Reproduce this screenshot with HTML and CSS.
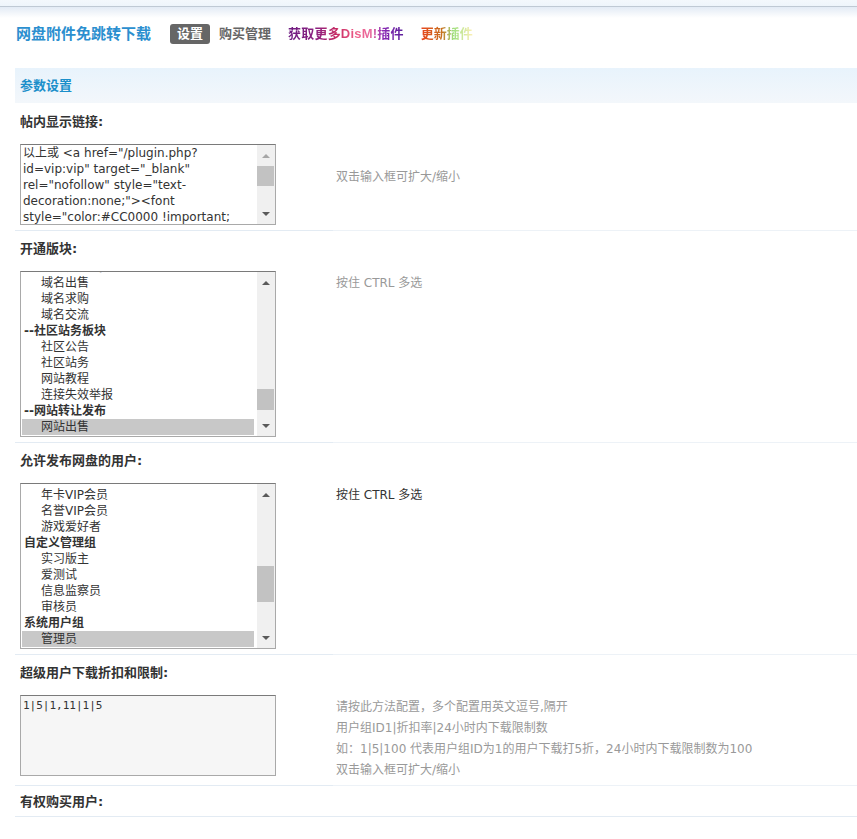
FILE: index.html
```html
<!DOCTYPE html>
<html lang="zh-CN">
  <head>
    <meta charset="UTF-8" />
    <title>网盘附件免跳转下载</title>
    <link rel="stylesheet" href="styles.css">
  </head>
  <body>
    <div class="topbar"></div>

    <div class="wrap">
      <div class="navhead">
        <h3>网盘附件免跳转下载</h3>
        <ul class="tabs">
          <li class="on">设置</li>
          <li>购买管理</li>
          <li><span class="more">获取更多DisM!插件</span></li>
          <li><span class="upd">更新插件</span></li>
        </ul>
      </div>

      <div class="secthead">参数设置</div>

      <!-- 帖内显示链接 -->
      <div class="row-label first">帖内显示链接:</div>
      <div class="row-body">
        <div class="cell">
          <div class="ta">
            <div class="ta-text">以上或 &lt;a href="/plugin.php?<br>id=vip:vip" target="_blank"<br>rel="nofollow" style="text-<br>decoration:none;"&gt;&lt;font<br>style="color:#CC0000 !important;</div>
            <div class="sbar">
              <div class="btn"><i class="arr up off"></i></div>
              <div class="track"><div class="thumb t-ta"></div></div>
              <div class="btn"><i class="arr down"></i></div>
            </div>
          </div>
        </div>
        <div class="tips tips-mid">双击输入框可扩大/缩小</div>
      </div>

      <!-- 开通版块 -->
      <div class="row-label">开通版块:</div>
      <div class="row-body">
        <div class="cell">
          <div class="listbox">
            <ul class="opts">
              <li class="grp">--域名转让发布</li>
              <li>域名出售</li>
              <li>域名求购</li>
              <li>域名交流</li>
              <li class="grp">--社区站务板块</li>
              <li>社区公告</li>
              <li>社区站务</li>
              <li>网站教程</li>
              <li>连接失效举报</li>
              <li class="grp">--网站转让发布</li>
              <li class="sel">网站出售</li>
            </ul>
            <div class="sbar">
              <div class="btn"><i class="arr up"></i></div>
              <div class="track"><div class="thumb t-forum"></div></div>
              <div class="btn"><i class="arr down"></i></div>
            </div>
          </div>
        </div>
        <div class="tips">按住 CTRL 多选</div>
      </div>

      <!-- 允许发布网盘的用户 -->
      <div class="row-label">允许发布网盘的用户:</div>
      <div class="row-body">
        <div class="cell">
          <div class="listbox">
            <ul class="opts">
              <li>月卡VIP会员</li>
              <li>年卡VIP会员</li>
              <li>名誉VIP会员</li>
              <li>游戏爱好者</li>
              <li class="grp">自定义管理组</li>
              <li>实习版主</li>
              <li>爱测试</li>
              <li>信息监察员</li>
              <li>审核员</li>
              <li class="grp">系统用户组</li>
              <li class="sel">管理员</li>
            </ul>
            <div class="sbar">
              <div class="btn"><i class="arr up"></i></div>
              <div class="track"><div class="thumb t-group"></div></div>
              <div class="btn"><i class="arr down"></i></div>
            </div>
          </div>
        </div>
        <div class="tips dark">按住 CTRL 多选</div>
      </div>

      <!-- 超级用户下载折扣和限制 -->
      <div class="row-label">超级用户下载折扣和限制:</div>
      <div class="row-body">
        <div class="cell">
          <div class="ta plain">
            <div class="ta-text mono">1|5|1,11|1|5</div>
          </div>
        </div>
        <div class="tips tips-long">
          请按此方法配置，多个配置用英文逗号,隔开<br>
          用户组ID1|折扣率|24小时内下载限制数<br>
          如：1|5|100 代表用户组ID为1的用户下载打5折，24小时内下载限制数为100<br>
          双击输入框可扩大/缩小
        </div>
      </div>

      <div class="row-label last">有权购买用户:</div>
    </div>
  </body>
</html>
```

FILE: styles.css
```css
body {
  margin: 0;
  background: #fff;
  color: #333;
  font-family: "DejaVu Sans", "Noto Sans CJK SC", sans-serif;
  font-size: 12px;
}

.topbar {
  height: 18px;
  background: linear-gradient(
    to bottom,
    #f3f8fc 0,
    #eef5fb 6px,
    #bfc9d4 6px,
    #bfc9d4 7px,
    #e3ebf5 7px,
    #ffffff 18px
  );
}

.wrap {
  margin-left: 15px;
}

/* 顶部标题和菜单 */
.navhead {
  display: flex;
  align-items: center;
  height: 20px;
  padding: 6px 0 0 1px;
  margin-bottom: 24px;
  font-family: "Liberation Sans", "Noto Sans CJK SC", sans-serif;
}

.navhead h3 {
  margin: 0 19px 0 0;
  font-size: 15px;
  line-height: 20px;
  font-weight: bold;
  color: #2b8fcf;
}

.tabs {
  display: flex;
  margin: 0;
  padding: 0;
  list-style: none;
}

.tabs li {
  padding: 0 7px;
  line-height: 20px;
  font-size: 13px;
  font-weight: bold;
  color: #666;
  border-radius: 3px;
}

.tabs li + li {
  margin-left: 2px;
}

.tabs li:nth-child(n+3) {
  margin-left: 3px;
}

.tabs li.on {
  background: #666;
  color: #fff;
}

.tabs .more {
  background: linear-gradient(90deg, #6e1d82 0, #8d2080 25%, #c72a62 42%, #f0628c 60%, #e86aa0 72%, #8a2ab4 82%, #5b1f9c 100%);
  -webkit-background-clip: text;
  background-clip: text;
  color: transparent;
  letter-spacing: 0.2px;
}

.tabs .upd {
  background: linear-gradient(90deg, #e8461e 0, #c8701e 40%, #9fe080 62%, #fff0b8 100%);
  -webkit-background-clip: text;
  background-clip: text;
  color: transparent;
}

/* 参数设置 */
.secthead {
  height: 35px;
  line-height: 35px;
  padding-left: 5px;
  background: linear-gradient(to bottom, #e8f3fc, #f3f7fb);
  color: #1b8fca;
  font-size: 13px;
  font-weight: bold;
}

.row-label {
  padding: 10px 5px 14px;
  line-height: 16px;
  font-size: 13px;
  font-weight: bold;
}

.row-label.first {
  padding-top: 11px;
}

.row-label.last {
  padding: 8px 5px 6px;
  border-bottom: 1px solid #e3ebf3;
}

.row-body {
  display: flex;
}

.row-body .cell {
  width: 313px;
  padding: 0 0 5px 5px;
  border-bottom: 1px solid #e3ebf3;
}

.tips {
  flex: 1;
  padding: 2px 0 0 3px;
  line-height: 21px;
  color: #999;
  border-bottom: 1px solid #edf2f7;
}

.tips.dark {
  color: #333;
}

.tips-mid {
  padding-top: 23px;
}

.tips-long {
  padding-bottom: 4px;
}

/* 输入框 */
.ta {
  display: flex;
  width: 254px;
  height: 79px;
  border: 1px solid #a9a9a9;
  border-top-color: #7a7a7a;
  background: #fff;
}

.ta.plain {
  background: #f6f6f6;
}

.ta-text {
  flex: 1;
  padding: 0 2px;
  line-height: 16px;
  white-space: nowrap;
  overflow: hidden;
}

.ta-text.mono {
  padding-top: 2px;
  font-family: "DejaVu Sans Mono", monospace;
  font-size: 11px;
}

/* 多选框 */
.listbox {
  display: flex;
  width: 254px;
  height: 164px;
  border: 1px solid #a9a9a9;
  border-top-color: #7a7a7a;
  background: #fff;
}

.opts {
  flex: 1;
  margin: 0;
  padding: 0;
  list-style: none;
  overflow: hidden;
}

.opts li {
  height: 16px;
  line-height: 16px;
  padding-left: 19px;
  margin: 0 3px 0 1px;
  white-space: nowrap;
}

.opts li:first-child {
  margin-top: -13px;
}

.opts li.grp {
  padding-left: 2px;
  font-weight: bold;
}

.opts li.sel {
  background: #c8c8c8;
}

/* 滚动条 */
.sbar {
  display: flex;
  flex-direction: column;
  width: 18px;
  background: #f0f0f0;
}

.sbar .btn {
  display: flex;
  align-items: center;
  justify-content: center;
  height: 21px;
}

.sbar .track {
  flex: 1;
}

.thumb {
  height: 20px;
  margin-right: 1px;
  background: #c2c2c2;
}

.thumb.t-forum {
  height: 21px;
  margin-top: 96px;
}

.thumb.t-group {
  height: 36px;
  margin-top: 61px;
}

.arr {
  width: 0;
  height: 0;
  border-left: 4px solid transparent;
  border-right: 4px solid transparent;
}

.arr.up {
  border-bottom: 4px solid #5a5a5a;
}

.arr.down {
  border-top: 4px solid #5a5a5a;
}

.arr.up.off {
  border-bottom-color: #a6a6a6;
}
```
